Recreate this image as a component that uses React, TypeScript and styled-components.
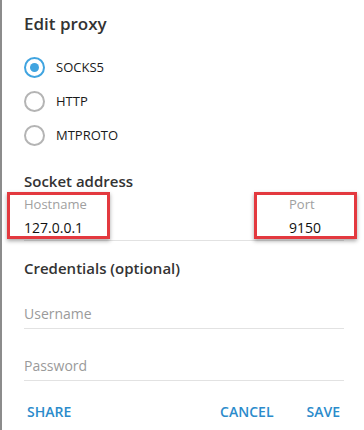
import React, { FC } from 'react';
import styled, { createGlobalStyle } from 'styled-components';

const GlobalStyle = createGlobalStyle`
  html, body {
    margin: 0;
    padding: 0;
    background: #ffffff;
  }
  body {
    font-family: 'Open Sans', 'Liberation Sans', sans-serif;
  }
`;

const Panel = styled.div`
  width: 364px;
  height: 430px;
  box-sizing: border-box;
  border-left: 2px solid #8c8c8c;
  padding: 12px 20px 0 22px;
  background: #ffffff;
  display: flex;
  flex-direction: column;
`;

const Title = styled.div`
  font-size: 17px;
  font-weight: 600;
  line-height: 24px;
  color: #333;
`;

const RadioList = styled.div`
  margin-top: 14px;
  display: flex;
  flex-direction: column;
`;

const RadioRow = styled.label`
  height: 34px;
  display: flex;
  align-items: center;
  gap: 11px;
  font-size: 13px;
  color: #1a1a1a;
`;

const RadioCircle = styled.span<{ $checked?: boolean }>`
  width: 21px;
  height: 21px;
  box-sizing: border-box;
  border-radius: 50%;
  border: 2px solid ${p => (p.$checked ? '#40a4e0' : '#b4b4b4')};
  display: flex;
  align-items: center;
  justify-content: center;

  &::after {
    content: '';
    display: ${p => (p.$checked ? 'block' : 'none')};
    width: 9px;
    height: 9px;
    border-radius: 50%;
    background: #40a4e0;
  }
`;

const SectionTitle = styled.div<{ $gap: number }>`
  margin-top: ${p => p.$gap}px;
  font-size: 15px;
  font-weight: 600;
  line-height: 20px;
  color: #333;
`;

const AddressRow = styled.div`
  margin-top: 5px;
  display: flex;
  gap: 19px;
  border-bottom: 1px solid #e2e2e2;
  padding-bottom: 2px;
`;

const AddressField = styled.div<{ $width?: number }>`
  position: relative;
  display: flex;
  flex-direction: column;
  ${p => (p.$width ? `width: ${p.$width}px;` : 'flex: 1;')}
`;

const FieldLabel = styled.div`
  font-size: 13px;
  line-height: 16px;
  color: #a0a0a0;
`;

const FieldValue = styled.div`
  margin-top: 6px;
  font-size: 14px;
  line-height: 20px;
  color: #111;
`;

const Highlight = styled.div<{ $left: number; $width: number }>`
  position: absolute;
  left: ${p => p.$left}px;
  top: -4px;
  width: ${p => p.$width}px;
  height: 47px;
  box-sizing: border-box;
  border: 3px solid #e3393f;
  box-shadow: 0 2px 4px rgba(0, 0, 0, 0.35);
  pointer-events: none;
`;

const InputField = styled.div<{ $gap: number }>`
  margin-top: ${p => p.$gap}px;
  font-size: 14px;
  line-height: 20px;
  color: #9a9a9a;
  padding-bottom: 4px;
  border-bottom: 1px solid #e2e2e2;
`;

const Buttons = styled.div`
  margin-top: 21px;
  display: flex;
  align-items: center;
  padding: 0 4px 0 3px;
`;

const TextButton = styled.button<{ $gap?: string }>`
  margin-left: ${p => p.$gap ?? '0'};
  padding: 0;
  border: none;
  background: none;
  font-family: 'Open Sans', 'Liberation Sans', sans-serif;
  font-size: 14px;
  font-weight: 600;
  line-height: 20px;
  color: #2b8bcb;
  cursor: pointer;
`;

const protocols = ['SOCKS5', 'HTTP', 'MTPROTO'];

const App: FC = () => {
  return (
    <>
      <GlobalStyle />
      <Panel>
        <Title>Edit proxy</Title>
        <RadioList>
          {protocols.map((name, i) => (
            <RadioRow key={name}>
              <RadioCircle $checked={i === 0} />
              {name}
            </RadioRow>
          ))}
        </RadioList>
        <SectionTitle $gap={19}>Socket address</SectionTitle>
        <AddressRow>
          <AddressField>
            <Highlight $left={-17} $width={103} />
            <FieldLabel>Hostname</FieldLabel>
            <FieldValue>127.0.0.1</FieldValue>
          </AddressField>
          <AddressField $width={55}>
            <Highlight $left={-35} $width={103} />
            <FieldLabel>Port</FieldLabel>
            <FieldValue>9150</FieldValue>
          </AddressField>
        </AddressRow>
        <SectionTitle $gap={17}>Credentials (optional)</SectionTitle>
        <InputField $gap={26}>Username</InputField>
        <InputField $gap={27}>Password</InputField>
        <Buttons>
          <TextButton>SHARE</TextButton>
          <TextButton $gap="auto">CANCEL</TextButton>
          <TextButton $gap="33px">SAVE</TextButton>
        </Buttons>
      </Panel>
    </>
  );
};

export default App;
